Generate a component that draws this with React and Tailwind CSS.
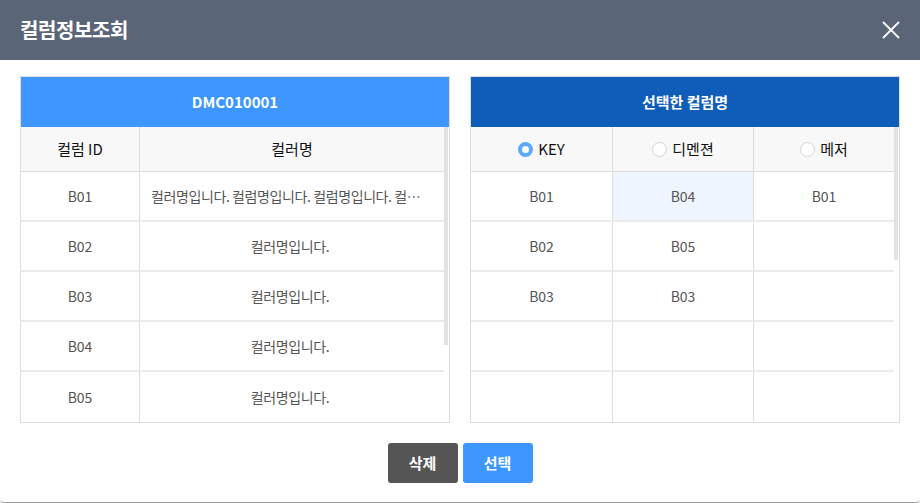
import React from 'react';

const leftRows = [
  { id: 'B01', name: '컬러명입니다. 컬럼명입니다. 컬럼명입니다. 컬럼명입니다.' },
  { id: 'B02', name: '컬러명입니다.' },
  { id: 'B03', name: '컬러명입니다.' },
  { id: 'B04', name: '컬러명입니다.' },
  { id: 'B05', name: '컬러명입니다.' },
];

const rightRows = [
  ['B01', 'B04', 'B01'],
  ['B02', 'B05', ''],
  ['B03', 'B03', ''],
  ['', '', ''],
  ['', '', ''],
];

const Radio = ({ checked, label }) => (
  <label className="flex items-center justify-center gap-[5px] text-[15px] text-[#111]">
    {checked ? (
      <span className="w-[15px] h-[15px] rounded-full border-[4px] border-[#5aa9ff] bg-white" />
    ) : (
      <span className="w-[15px] h-[15px] rounded-full border border-[#d4d4d4] bg-white" />
    )}
    <span>{label}</span>
  </label>
);

const ScrollBar = ({ thumb }) => (
  <div className="w-[5px] shrink-0 bg-white">
    <div className={`w-[4px] bg-[#e2e2e2] ${thumb}`} />
  </div>
);

export default function App() {
  return (
    <div
      className="w-[920px] h-[503px] bg-white flex flex-col rounded-b-[4px] border-b border-[#9a9a9a] overflow-hidden"
      style={{ fontFamily: '"Noto Sans CJK KR", "Noto Sans", sans-serif' }}
    >
      <div className="h-[60px] shrink-0 bg-[#5a6577] flex items-center justify-between pl-[20px] pr-[19px]">
        <h1 className="text-white text-[20px] font-bold tracking-[-0.4px]">컬럼정보조회</h1>
        <svg width="20" height="20" viewBox="0 0 20 20" fill="none" stroke="white" strokeWidth="1.8">
          <path d="M2 2L18 18M18 2L2 18" />
        </svg>
      </div>

      <div className="flex gap-[20px] px-[20px] pt-[16px]">
        {/* left table */}
        <div className="w-[430px] border border-[#dddddd]">
          <div className="h-[50px] bg-[#3d97ff] flex items-center justify-center text-white text-[15px] font-bold">
            DMC010001
          </div>
          <div className="flex">
            <div className="flex-1">
              <div className="grid grid-cols-[119px_1fr] h-[45px] bg-[#f8f8f8] border-b border-[#dddddd] text-[15px] text-[#111]">
                <div className="flex items-center justify-center border-r border-[#dddddd]">컬럼 ID</div>
                <div className="flex items-center justify-center">컬러명</div>
              </div>
              {leftRows.map((r, i) => (
                <div
                  key={r.id}
                  className={`grid grid-cols-[119px_1fr] h-[50px] text-[14px] text-[#555] ${i < leftRows.length - 1 ? 'border-b-2 border-[#ebebeb]' : ''}`}
                >
                  <div className="flex items-center justify-center border-r border-[#dddddd]">{r.id}</div>
                  <div className="flex items-center justify-center min-w-0 pl-[11px] pr-[15px]">
                    <span className="truncate tracking-[-0.4px]">{r.name}</span>
                  </div>
                </div>
              ))}
            </div>
            <ScrollBar thumb="h-[218px]" />
          </div>
        </div>

        {/* right table */}
        <div className="w-[430px] border border-[#dddddd]">
          <div className="h-[50px] bg-[#0f5db8] flex items-center justify-center text-white text-[15px] font-bold">
            선택한 컬럼명
          </div>
          <div className="flex">
            <div className="flex-1">
              <div className="grid grid-cols-[142px_141px_1fr] h-[45px] bg-[#f8f8f8] border-b border-[#dddddd]">
                <div className="flex items-center justify-center border-r border-[#dddddd]">
                  <Radio checked label="KEY" />
                </div>
                <div className="flex items-center justify-center border-r border-[#dddddd]">
                  <Radio label="디멘젼" />
                </div>
                <div className="flex items-center justify-center">
                  <Radio label="메저" />
                </div>
              </div>
              {rightRows.map((r, i) => (
                <div
                  key={i}
                  className={`grid grid-cols-[142px_141px_1fr] h-[50px] text-[14px] text-[#555] ${i < rightRows.length - 1 ? 'border-b-2 border-[#ebebeb]' : ''}`}
                >
                  <div className="flex items-center justify-center border-r border-[#dddddd]">{r[0]}</div>
                  <div className={`flex items-center justify-center border-r border-[#dddddd] ${i === 0 ? 'bg-[#eef5fe]' : ''}`}>{r[1]}</div>
                  <div className="flex items-center justify-center">{r[2]}</div>
                </div>
              ))}
            </div>
            <ScrollBar thumb="h-[133px]" />
          </div>
        </div>
      </div>

      <div className="flex justify-center gap-[5px] pt-[20px]">
        <button className="w-[70px] h-[40px] rounded-[3px] bg-[#555555] text-white text-[15px] font-bold">삭제</button>
        <button className="w-[70px] h-[40px] rounded-[3px] bg-[#3d97ff] text-white text-[15px] font-bold">선택</button>
      </div>
    </div>
  );
}
